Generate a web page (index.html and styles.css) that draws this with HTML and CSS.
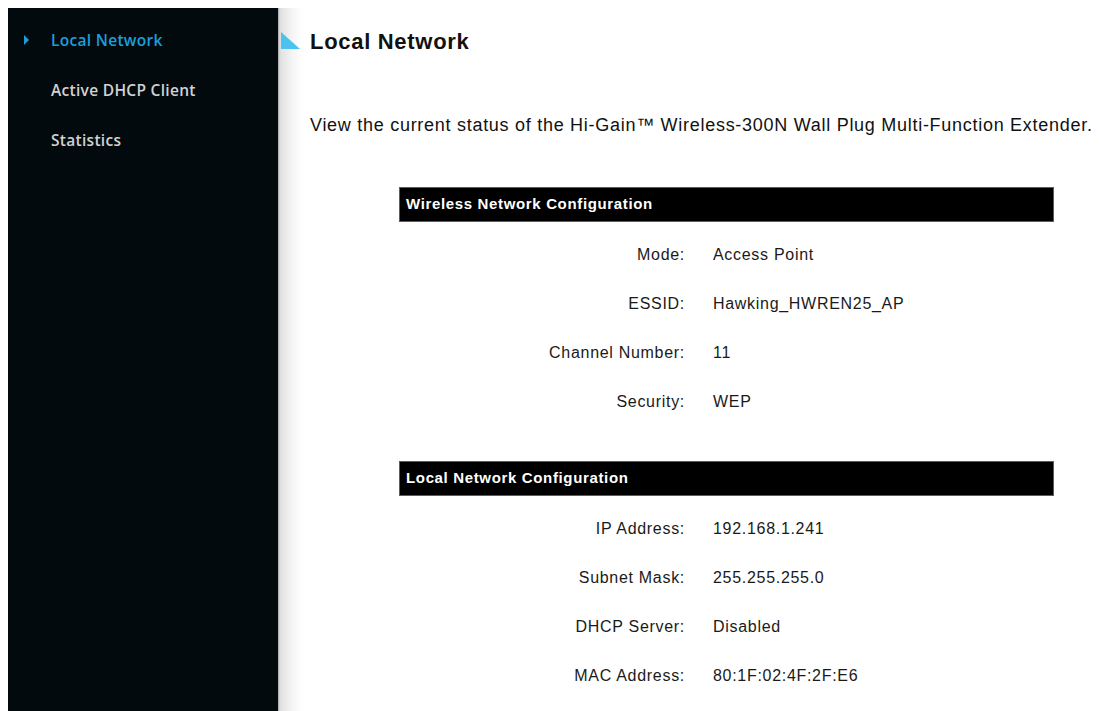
FILE: index.html
```html
<!DOCTYPE html>
<html lang="en">
<head>
<meta charset="utf-8">
<title>Local Network</title>
<link rel="stylesheet" href="styles.css">
</head>
<body>
<div class="layout">
  <nav class="sidebar">
    <a class="nav-item active" href="#">Local Network</a>
    <a class="nav-item" href="#">Active DHCP Client</a>
    <a class="nav-item" href="#">Statistics</a>
  </nav>
  <main class="content">
    <h1 class="page-title"><span class="title-mark"></span>Local Network</h1>
    <p class="intro">View the current status of the Hi-Gain™ Wireless-300N Wall Plug Multi-Function Extender.</p>

    <section class="panel">
      <div class="panel-head">Wireless Network Configuration</div>
      <div class="row"><span class="label">Mode:</span><span class="value">Access Point</span></div>
      <div class="row"><span class="label">ESSID:</span><span class="value">Hawking_HWREN25_AP</span></div>
      <div class="row"><span class="label">Channel Number:</span><span class="value">11</span></div>
      <div class="row"><span class="label">Security:</span><span class="value">WEP</span></div>
    </section>

    <section class="panel">
      <div class="panel-head">Local Network Configuration</div>
      <div class="row"><span class="label">IP Address:</span><span class="value">192.168.1.241</span></div>
      <div class="row"><span class="label">Subnet Mask:</span><span class="value">255.255.255.0</span></div>
      <div class="row"><span class="label">DHCP Server:</span><span class="value">Disabled</span></div>
      <div class="row"><span class="label">MAC Address:</span><span class="value">80:1F:02:4F:2F:E6</span></div>
    </section>
  </main>
</div>
</body>
</html>
```

FILE: styles.css
```css
html, body {
  background: #ffffff;
}

body {
  margin: 8px;
  font-family: "Liberation Sans", Arial, sans-serif;
  color: #111111;
}

.layout {
  display: flex;
  min-height: 720px;
}

/* left navigation column */
.sidebar {
  width: 270px;
  flex: none;
  background: #030a0e;
  display: flex;
  flex-direction: column;
  padding-top: 21px;
}

.nav-item {
  position: relative;
  display: block;
  height: 50px;
  padding-left: 43px;
  font-family: "Open Sans", "DejaVu Sans", sans-serif;
  font-size: 15.5px;
  font-weight: 600;
  line-height: 22px;
  color: #d2d2d2;
  text-decoration: none;
  letter-spacing: 0.3px;
}

.nav-item.active {
  color: #1a9fdb;
}

/* small pointer in front of the current item */
.nav-item.active::before {
  content: "";
  position: absolute;
  left: 16px;
  top: 6px;
  border-style: solid;
  border-width: 5px 0 5px 5px;
  border-color: transparent transparent transparent #1a9fdb;
}

/* main area with the soft edge next to the sidebar */
.content {
  flex: 1;
  min-width: 0;
  padding-left: 3px;
  background:
    linear-gradient(to right, #9a9a9a 0, #cfcfcf 1px, #e2e2e2 3px, #f4f4f4 14px, #ffffff 24px) no-repeat left top / 24px 100%;
}

.page-title {
  display: flex;
  align-items: flex-end;
  margin: 0;
  padding-top: 21px;
  font-size: 22px;
  font-weight: bold;
  line-height: 26px;
  letter-spacing: 0.7px;
  color: #111111;
}

.title-mark {
  width: 0;
  height: 0;
  margin: 0 10px 6px 0;
  border-style: solid;
  border-width: 17px 0 0 19px;
  border-color: transparent transparent transparent #4cc2f1;
}

.intro {
  margin: 58px 0 0 29px;
  font-size: 18px;
  line-height: 24px;
  letter-spacing: 0.72px;
  white-space: nowrap;
  color: #111111;
}

.panel {
  width: 655px;
  margin: 50px 0 0 118px;
}

.panel + .panel {
  margin-top: 35px;
}

.panel-head {
  height: 35px;
  box-sizing: border-box;
  border: 1px solid #5c5c5c;
  background: #000000;
  color: #ffffff;
  font-size: 15px;
  font-weight: bold;
  letter-spacing: 0.65px;
  line-height: 32px;
  padding-left: 6px;
  margin-bottom: 8px;
}

.row {
  display: grid;
  grid-template-columns: 286px 1fr;
  column-gap: 28px;
  height: 49px;
  align-items: center;
  font-size: 16px;
  letter-spacing: 0.7px;
  color: #1a1a1a;
}

.label {
  text-align: right;
}
```
